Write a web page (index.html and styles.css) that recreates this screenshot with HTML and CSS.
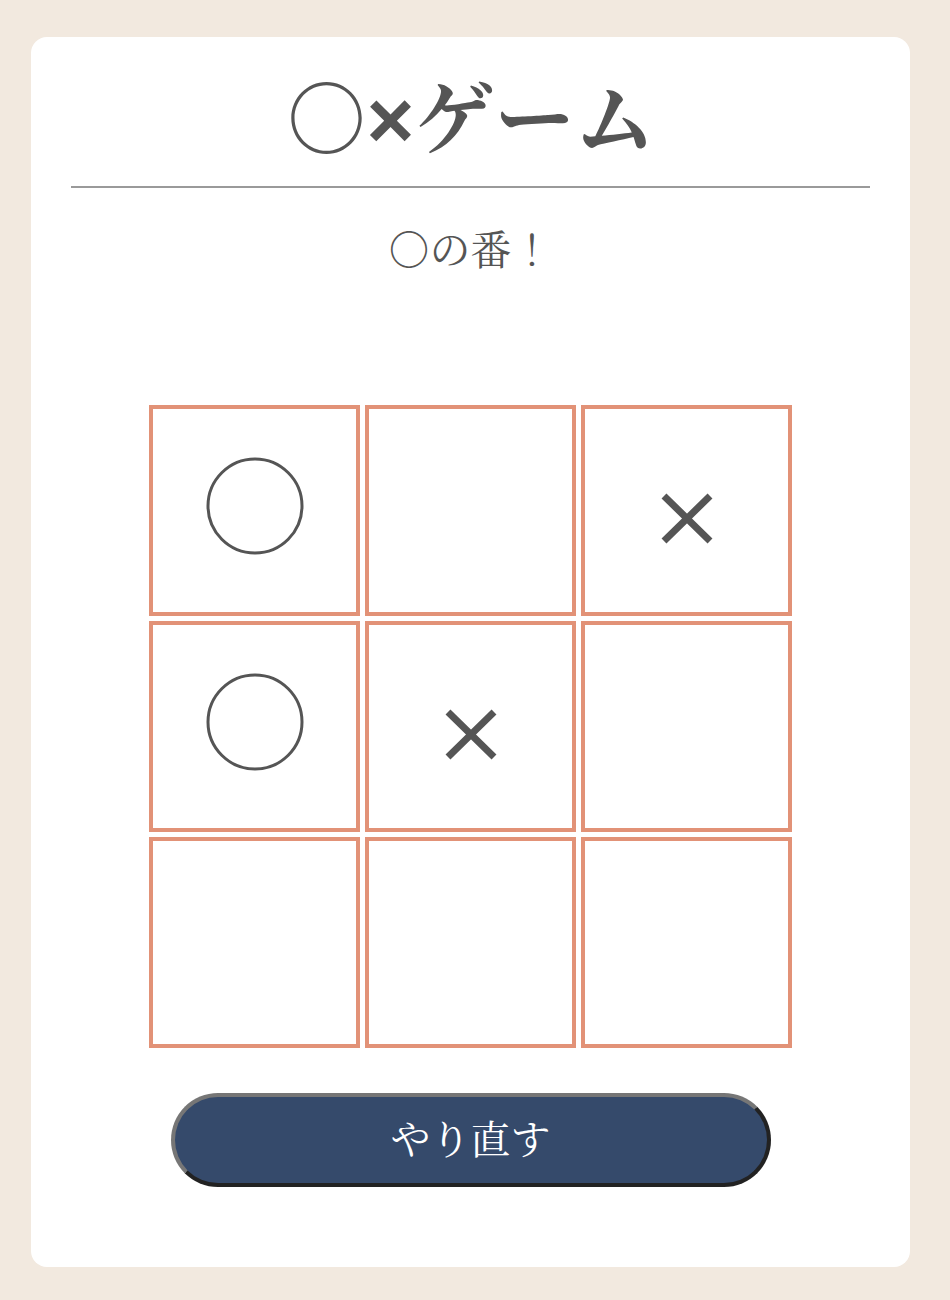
FILE: index.html
```html
<!DOCTYPE html>
<html lang="ja">
<head>
<meta charset="utf-8">
<title>○×ゲーム</title>
<link rel="stylesheet" href="styles.css">
</head>
<body>
<main class="card">
  <h1 class="title">○<span class="cross">×</span>ゲーム</h1>
  <hr class="rule">
  <p class="status">○の番！</p>
  <div class="board">
    <div class="cell"><svg class="mark" viewBox="0 0 100 100"><circle cx="50" cy="45" r="47" fill="none" stroke="#555" stroke-width="3"/></svg></div>
    <div class="cell"></div>
    <div class="cell"><svg class="mark" viewBox="0 0 100 100"><path d="M27 35 L73 80 M73 35 L27 80" stroke="#555" stroke-width="7" fill="none"/></svg></div>
    <div class="cell"><svg class="mark" viewBox="0 0 100 100"><circle cx="50" cy="45" r="47" fill="none" stroke="#555" stroke-width="3"/></svg></div>
    <div class="cell"><svg class="mark" viewBox="0 0 100 100"><path d="M27 35 L73 80 M73 35 L27 80" stroke="#555" stroke-width="7" fill="none"/></svg></div>
    <div class="cell"></div>
    <div class="cell"></div>
    <div class="cell"></div>
    <div class="cell"></div>
  </div>
  <button class="reset" type="button">やり直す</button>
</main>
</body>
</html>
```

FILE: styles.css
```css
html, body {
  margin: 0;
  padding: 0;
  background: #f2e9df;
}
body {
  padding: 37px 0 33px 31px;
  font-family: "Noto Serif CJK JP", "Liberation Serif", serif;
  color: #555;
}
.card {
  box-sizing: border-box;
  width: 879px;
  height: 1230px;
  background: #fff;
  border-radius: 16px;
  padding: 27px 40px 0;
  display: flex;
  flex-direction: column;
  align-items: center;
}
.title {
  margin: 0;
  height: 100px;
  font-size: 80px;
  line-height: 100px;
  font-weight: bold;
  color: #555;
  text-align: center;
}
.cross {
  font-family: "Liberation Sans", sans-serif;
  font-size: 82px;
  line-height: 1;
}
.rule {
  align-self: stretch;
  margin: 22px 0 0;
  border: none;
  border-top: 2px solid #9a9a9a;
  height: 0;
}
.status {
  margin: 32px 0 0;
  font-size: 41px;
  line-height: 56px;
  color: #555;
}
.board {
  margin-top: 129px;
  display: grid;
  grid-template-columns: repeat(3, 211px);
  grid-template-rows: repeat(3, 211px);
  gap: 5px;
}
.cell {
  box-sizing: border-box;
  border: 4px solid #e29277;
  display: flex;
  align-items: center;
  justify-content: center;
}
.mark {
  width: 100px;
  height: 100px;
  overflow: visible;
}
.reset {
  margin-top: 45px;
  width: 600px;
  height: 94px;
  padding: 0 0 8px;
  border-radius: 47px;
  border: 4px solid;
  border-color: #767676 #222 #222 #767676;
  background: #354a6b;
  color: #fff;
  font-family: "Noto Serif CJK JP", "Liberation Serif", serif;
  font-size: 40px;
}
```
